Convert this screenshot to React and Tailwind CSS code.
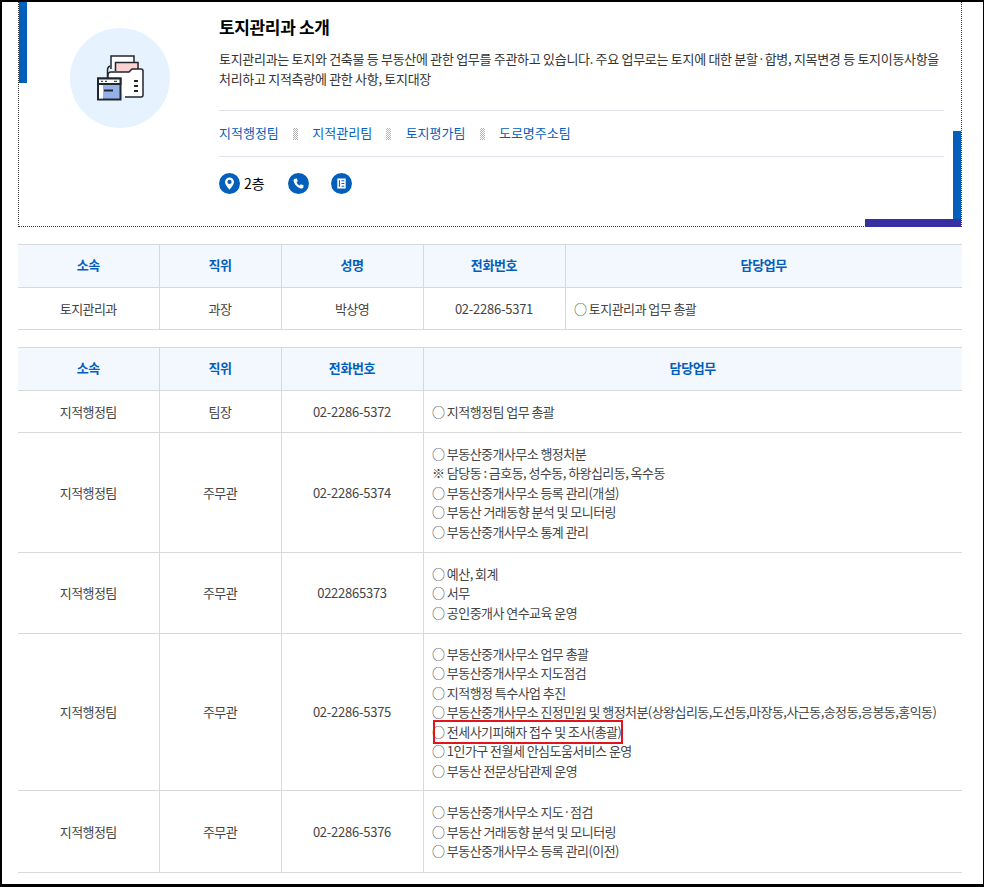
import { Fragment } from 'react';

const font = { fontFamily: '"Noto Sans CJK KR", "Noto Sans", sans-serif' };

const teams = ['지적행정팀', '지적관리팀', '토지평가팀', '도로명주소팀'];

const members = [
  { team: '지적행정팀', role: '팀장', tel: '02-2286-5372', h: 'h-[42px]', work: ['○ 지적행정팀 업무 총괄'] },
  {
    team: '지적행정팀', role: '주무관', tel: '02-2286-5374', h: 'h-[120px]',
    work: ['○ 부동산중개사무소 행정처분', '※ 담당동 : 금호동, 성수동, 하왕십리동, 옥수동', '○ 부동산중개사무소 등록 관리(개설)', '○ 부동산 거래동향 분석 및 모니터링', '○ 부동산중개사무소 통계 관리'],
  },
  { team: '지적행정팀', role: '주무관', tel: '0222865373', h: 'h-[81px]', work: ['○ 예산, 회계', '○ 서무', '○ 공인중개사 연수교육 운영'] },
  {
    team: '지적행정팀', role: '주무관', tel: '02-2286-5375', h: 'h-[157px]',
    work: ['○ 부동산중개사무소 업무 총괄', '○ 부동산중개사무소 지도점검', '○ 지적행정 특수사업 추진', '○ 부동산중개사무소 진정민원 및 행정처분(상왕십리동,도선동,마장동,사근동,송정동,응봉동,홍익동)', '○ 전세사기피해자 접수 및 조사(총괄)', '○ 1인가구 전월세 안심도움서비스 운영', '○ 부동산 전문상담관제 운영'],
  },
  { team: '지적행정팀', role: '주무관', tel: '02-2286-5376', h: 'h-[82px]', work: ['○ 부동산중개사무소 지도·점검', '○ 부동산 거래동향 분석 및 모니터링', '○ 부동산중개사무소 등록 관리(이전)'] },
];

function FolderIcon() {
  return (
    <svg width="47" height="46" viewBox="97 55 47 46" fill="none" stroke="#22262e" strokeWidth="1.5">
      <path d="M111 69V56H134V62" fill="#fff" />
      <rect x="115" y="62" width="24" height="10" fill="#fdd2d2" stroke="none" />
      <path d="M115.500 71V62.500H138V69" />
      <path d="M110 66Q107.500 67 107.500 70V78" />
      <path d="M108 78V75Q108 72 111 72H129L132 69H141Q143 69 143 71V95Q143 97 141 97H125" fill="#fff" />
      <path d="M134 81H138M134 86H138M134 91H138" strokeWidth="1.800" />
      <rect x="98" y="78.500" width="22.500" height="21" fill="#95b2e8" strokeWidth="2" />
      <rect x="98" y="78.500" width="22.500" height="5.500" fill="#fff" strokeWidth="2" />
      <path d="M99 85H103V98.500H99Z" fill="#fff" stroke="none" />
      <path d="M101 81.300H103M105 81.300H107M114 81.300H117" strokeWidth="1" />
      <path d="M104 90.500H113" strokeWidth="2" />
    </svg>
  );
}

function RoundIcon({ children }) {
  return (
    <span className="flex h-[21px] w-[21px] items-center justify-center rounded-full bg-[#045fbb]">
      <svg width="13" height="13" viewBox="0 0 14 14" fill="#fff">{children}</svg>
    </span>
  );
}

function Th({ children, className = '' }) {
  return <th className={`border border-[#d5d8dd] bg-[#f3f7fe] pb-[2px] text-[13px] font-bold text-[#045fbb] first:border-l-0 last:border-r-0 ${className}`}>{children}</th>;
}

function Td({ children, className = '' }) {
  return <td className={`border border-[#d9d9d9] text-center text-[13px] tracking-[-0.55px] text-[#444] first:border-l-0 last:border-r-0 ${className}`}>{children}</td>;
}

export default function App() {
  return (
    <div style={font} className="h-[887px] w-[984px] overflow-hidden border-2 border-b-[3px] border-r-[1px] border-black bg-white pl-4 pr-[21px] tracking-[-0.35px]">
      <section className="relative flex h-[225px] border-x border-b border-dotted border-x-[#333] border-b-[#333]">
        <span className="absolute left-0 top-0 h-[81px] w-2 bg-[#045fbb]" />
        <span className="absolute bottom-0 right-0 h-[95px] w-2 bg-[#045fbb]" />
        <span className="absolute -bottom-px right-0 h-2 w-[96px] bg-[#3730a3]" />

        <div className="ml-[51px] mt-[26px] flex h-[100px] w-[100px] shrink-0 items-center justify-center rounded-full bg-[#e6f2fe] pl-px">
          <FolderIcon />
        </div>

        <div className="ml-[49px] w-[725px] pt-[13px]">
          <h2 className="text-[17px] font-bold leading-[24px] text-black">토지관리과 소개</h2>
          <p className="mt-[10px] text-[13px] leading-[19.5px] tracking-[-0.3px] text-[#333]">
            토지관리과는 토지와 건축물 등 부동산에 관한 업무를 주관하고 있습니다. 주요 업무로는 토지에 대한 분할·합병, 지목변경 등 토지이동사항을 처리하고 지적측량에 관한 사항, 토지대장
          </p>
          <nav className="mt-[22px] flex h-[47px] items-center border-y border-[#dfe2e8] pb-[2px] text-[13px] tracking-normal text-[#045fbb]">
            {teams.map((team, i) => (
              <Fragment key={team}>
                {i > 0 && <span className="mx-[14.25px] mt-[3px] h-[12px] w-[5px] bg-[repeating-conic-gradient(#b5b5b5_0_25%,#fff_0_50%)] bg-[length:2px_2px]" />}
                <a>{team}</a>
              </Fragment>
            ))}
          </nav>
          <div className="mt-[16px] flex items-center text-[14px] text-black">
            <RoundIcon>
              <path fillRule="evenodd" d="M7 0.5a4.8 4.8 0 0 0-4.8 4.8C2.2 8.6 7 13.5 7 13.5s4.8-4.900 4.800-8.200A4.800 4.800 0 0 0 7 .5zm0 2.500a2.300 2.300 0 1 1 0 4.600 2.300 2.300 0 0 1 0-4.600z" />
            </RoundIcon>
            <span className="ml-[4px] w-[44px] tracking-normal">2층</span>
            <RoundIcon>
              <path d="M3.200 1.800 5.300 1.500 6.200 4.500 4.900 5.600C5.400 7 6.800 8.500 8.300 9.100L9.500 7.800 12.500 8.800 12.200 11C12 12 11 12.600 10 12.400 6 11.600 2.400 8 1.700 4 1.500 3 2.200 2 3.200 1.800Z" />
            </RoundIcon>
            <span className="w-[22px]" />
            <RoundIcon>
              <path fillRule="evenodd" d="M2.500 1.500h9v11h-9zM7 3.500h3v1H7zM7 6.500h3v1H7zM7 9.500h3v1H7zM4.200 3.500h1.200v7H4.200z" />
            </RoundIcon>
          </div>
        </div>
      </section>

      <table className="mt-[17px] w-[944px] table-fixed border-collapse">
        <colgroup>
          <col className="w-[141px]" />
          <col className="w-[122px]" />
          <col className="w-[142px]" />
          <col className="w-[142px]" />
          <col />
        </colgroup>
        <thead>
          <tr className="h-[43px]">
            <Th>소속</Th><Th>직위</Th><Th>성명</Th><Th>전화번호</Th><Th>담당업무</Th>
          </tr>
        </thead>
        <tbody>
          <tr className="h-[42px]">
            <Td>토지관리과</Td><Td>과장</Td><Td>박상영</Td><Td className="!tracking-[-0.25px]">02-2286-5371</Td>
            <Td className="pl-[8.5px] !text-left">○ 토지관리과 업무 총괄</Td>
          </tr>
        </tbody>
      </table>

      <table className="mt-[17px] w-[944px] table-fixed border-collapse">
        <colgroup>
          <col className="w-[141px]" />
          <col className="w-[122px]" />
          <col className="w-[142px]" />
          <col />
        </colgroup>
        <thead>
          <tr className="h-[43px]">
            <Th>소속</Th><Th>직위</Th><Th>전화번호</Th><Th>담당업무</Th>
          </tr>
        </thead>
        <tbody>
          {members.map((m) => (
            <tr key={m.tel} className={m.h}>
              <Td>{m.team}</Td>
              <Td>{m.role}</Td>
              <Td className="!tracking-[-0.25px]">{m.tel}</Td>
              <Td className="pl-[8.5px] !text-left leading-[19.5px]">
                {m.work.map((line) => (
                  <div key={line} className={line.startsWith('○ 전세') ? 'relative' : ''}>
                    {line}
                    {line.startsWith('○ 전세') && <span className="absolute -top-[2px] left-[0.5px] h-[24px] w-[190px] border-2 border-[#e3141c]" />}
                  </div>
                ))}
              </Td>
            </tr>
          ))}
        </tbody>
      </table>
    </div>
  );
}
